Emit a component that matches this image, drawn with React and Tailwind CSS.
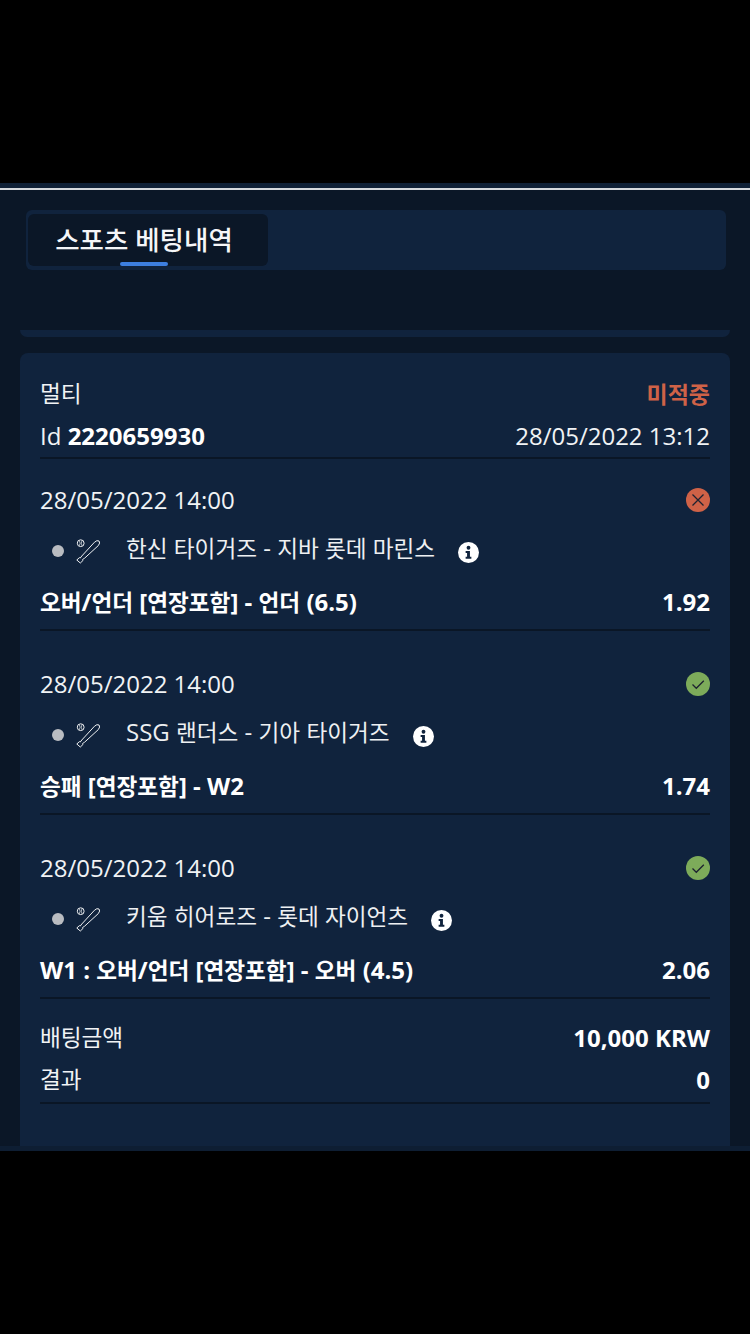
import React from "react";

const Bat = () => (
  <svg width="25" height="25" viewBox="0 0 25 25" fill="none" stroke="#eef0f2" strokeWidth="1" className="shrink-0">
    <circle cx="4.7" cy="4.2" r="3.4" />
    <path d="M3.3 1.6 Q5 4.2 3.3 6.8 M6.1 1.6 Q4.4 4.2 6.1 6.8" strokeWidth="0.7" />
    <path d="M18.5 3.2 Q21 0.8 23 2 Q24.6 3.8 22.3 6.6 L8.6 19.2 L6.5 20.6 L6.9 21.6 L4.3 24 L0.8 21 L3.4 18.6 L4.2 19.1 L5.8 17 Z" />
  </svg>
);

const Info = () => (
  <svg width="21" height="21" viewBox="0 0 22 22" className="shrink-0">
    <circle cx="11" cy="11" r="11" fill="#fff" />
    <circle cx="11" cy="6" r="2" fill="#10233d" />
    <path d="M8 9.5h4.5v6H14v2H8v-2h1.5v-4H8z" fill="#10233d" />
  </svg>
);

const Lost = () => (
  <svg width="24" height="24" viewBox="0 0 24 24" className="shrink-0">
    <circle cx="12" cy="12" r="12" fill="#cf6247" />
    <path d="M6.5 6.5l11 11M17.5 6.5l-11 11" stroke="#1d2230" strokeWidth="1.3" />
  </svg>
);

const Won = () => (
  <svg width="24" height="24" viewBox="0 0 24 24" className="shrink-0">
    <circle cx="12" cy="12" r="12" fill="#7dab5a" />
    <path d="M6.5 12.5l3.8 3.8 7.5-7.5" stroke="#1d2230" strokeWidth="1.3" fill="none" />
  </svg>
);

// Hangul runs are set a little smaller than the Latin text around them.
const T = ({ children }) =>
  children.split(/([가-힣]+)/).map((part, i) =>
    i % 2 ? <span key={i} className="text-[22.6px]">{part}</span> : part
  );

const bets = [
  { date: "28/05/2022 14:00", icon: <Lost />, match: "한신 타이거즈 - 지바 롯데 마린스", market: "오버/언더 [연장포함] - 언더 (6.5)", odd: "1.92" },
  { date: "28/05/2022 14:00", icon: <Won />, match: "SSG 랜더스 - 기아 타이거즈", market: "승패 [연장포함] - W2", odd: "1.74" },
  { date: "28/05/2022 14:00", icon: <Won />, match: "키움 히어로즈 - 롯데 자이언츠", market: "W1 : 오버/언더 [연장포함] - 오버 (4.5)", odd: "2.06" },
];

const Bet = ({ date, icon, match, market, odd }) => (
  <div className="h-[172px] mb-[12px] border-b-2 border-[#0a1626] flex flex-col">
    <div className="flex items-center justify-between h-[28px] mt-[27px]">
      <span className="text-[#f1f3f5]">{date}</span>
      {icon}
    </div>
    <div className="flex items-center h-[30px] mt-[21px] pl-[12px]">
      <span className="w-[12px] h-[12px] rounded-full bg-[#b9bcc1] shrink-0 relative top-[1px]" />
      <span className="ml-[12px] flex relative top-[1px]"><Bat /></span>
      <span className="ml-[25px] text-[#eef0f2] relative -top-[2px]"><T>{match}</T></span>
      <span className="ml-[23px] flex relative top-[2px]"><Info /></span>
    </div>
    <div className="flex items-center justify-between h-[32px] mt-[21px] font-bold text-white">
      <span><T>{market}</T></span>
      <span>{odd}</span>
    </div>
  </div>
);

export default function App() {
  return (
    <div
      className="w-[750px] h-[1334px] bg-black overflow-hidden flex flex-col text-[24px]"
      style={{ fontFamily: '"Open Sans", "Noto Sans CJK KR", sans-serif' }}
    >
      <div className="h-[183px] shrink-0" />
      <div className="h-[968px] shrink-0 bg-[#0b1727] flex flex-col">
        <div className="h-[5px] bg-[#0f2036]" />
        <div className="h-[2px] bg-[#d5d8dc]" />
        <div className="mt-[20px] ml-[26px] mr-[24px] h-[60px] bg-[#10233d] rounded-[6px] p-[2px] pb-[4px] shrink-0">
          <div className="relative w-[240px] h-[52px] mt-[2px] bg-[#0b1727] rounded-[6px] flex items-center justify-center pr-[8px]">
            <span className="text-[26.5px] font-medium text-[#f5f6f8] leading-none">스포츠 베팅내역</span>
            <div className="absolute left-[92px] bottom-0 w-[48px] h-[4px] rounded-[2px] bg-[#3d7fe0]" />
          </div>
        </div>
        <div className="mt-[60px] mx-[20px] h-[7px] bg-[#10233d] rounded-b-[8px] shrink-0" />
        <div className="mt-[16px] mx-[20px] h-[793px] bg-[#10233d] rounded-t-[8px] px-[20px] shrink-0">
          <div className="border-b-2 border-[#0a1626] h-[106px] pt-[26px]">
            <div className="flex items-center justify-between h-[30px]">
              <span className="text-[22.6px] text-[#f1f3f5]">멀티</span>
              <span className="text-[23px] font-bold text-[#cf6247]">미적중</span>
            </div>
            <div className="flex items-center justify-between h-[32px] mt-[11px] text-[#f1f3f5]">
              <span>Id <b className="text-white">2220659930</b></span>
              <span>28/05/2022 13:12</span>
            </div>
          </div>
          {bets.map((b, i) => <Bet key={i} {...b} />)}
          <div className="border-b-2 border-[#0a1626] h-[93px] pt-[11px]">
            <div className="flex items-center justify-between h-[32px]">
              <span className="text-[22.6px] text-[#f1f3f5]">배팅금액</span>
              <span className="font-bold text-white">10,000 KRW</span>
            </div>
            <div className="flex items-center justify-between h-[32px] mt-[10px]">
              <span className="text-[22.6px] text-[#f1f3f5]">결과</span>
              <span className="font-bold text-white">0</span>
            </div>
          </div>
        </div>
        <div className="h-[5px] bg-[#0e1e33] shrink-0" />
      </div>
    </div>
  );
}
